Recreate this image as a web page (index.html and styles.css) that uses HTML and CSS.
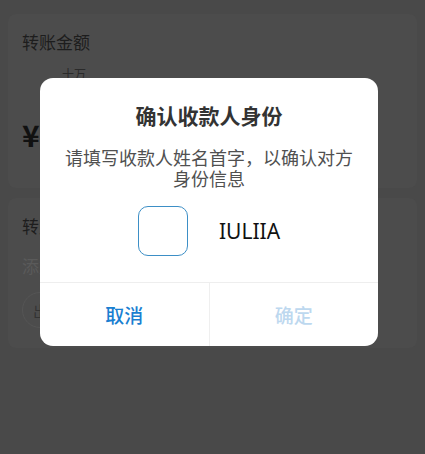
FILE: index.html
```html
<!DOCTYPE html>
<html lang="zh">
<head>
<meta charset="utf-8">
<link rel="stylesheet" href="styles.css">
</head>
<body>
<div class="page">
  <section class="card card-amount">
    <div class="label">转账金额</div>
    <div class="hint">十万</div>
    <div class="yen">¥</div>
  </section>
  <section class="card card-note">
    <div class="label">转账说明</div>
    <div class="muted">添加转账说明</div>
    <div class="pill">出</div>
  </section>
</div>
<div class="dialog">
  <div class="dialog-body">
    <h1 class="title">确认收款人身份</h1>
    <p class="desc">请填写收款人姓名首字，以确认对方身份信息</p>
    <div class="name-row">
      <div class="input-box"></div>
      <span class="name">IULIIA</span>
    </div>
  </div>
  <div class="actions">
    <div class="btn btn-cancel">取消</div>
    <div class="btn btn-ok">确定</div>
  </div>
</div>
</body>
</html>
```
FILE: styles.css
```css
html, body {
  margin: 0;
  padding: 0;
  background: #494949;
  font-family: "Noto Sans CJK SC", "Noto Sans", sans-serif;
}
.page {
  width: 425px;
  height: 454px;
  padding: 14px 8px 0;
  box-sizing: border-box;
  display: flex;
  flex-direction: column;
  gap: 10px;
}
.card {
  background: #4c4c4c;
  border-radius: 8px;
  padding: 0 14px;
  display: flex;
  flex-direction: column;
  color: #1d1d1d;
}
.card-amount {
  height: 174px;
}
.card-note {
  height: 150px;
}
.label {
  font-size: 17px;
  line-height: 24px;
  margin-top: 16px;
}
.hint {
  font-size: 12px;
  line-height: 16px;
  margin: 12px 0 0 40px;
  color: #2a2a2a;
}
.yen {
  font-size: 30px;
  font-weight: 700;
  line-height: 40px;
  margin-top: 32px;
  color: #111;
}
.muted {
  font-size: 17px;
  line-height: 24px;
  margin-top: 16px;
  color: #5a5a5a;
}
.pill {
  margin-top: 14px;
  width: 80px;
  height: 36px;
  border: 1px solid #555;
  border-radius: 18px;
  font-size: 15px;
  line-height: 36px;
  padding-left: 10px;
  box-sizing: border-box;
  color: #333;
}
.dialog {
  position: absolute;
  left: 40px;
  top: 78px;
  width: 338px;
  height: 268px;
  background: #fff;
  border-radius: 13px;
  display: flex;
  flex-direction: column;
  overflow: hidden;
}
.dialog-body {
  padding: 22px 20px 0;
  height: 205px;
  box-sizing: border-box;
  border-bottom: 1px solid #eeeeee;
  display: flex;
  flex-direction: column;
  align-items: center;
}
.title {
  margin: 0;
  font-size: 21px;
  line-height: 30px;
  font-weight: 700;
  color: #333;
}
.desc {
  margin: 17px 0 0;
  font-size: 18px;
  line-height: 21px;
  color: #505050;
  text-align: center;
}
.name-row {
  margin-top: 17px;
  display: flex;
  align-items: center;
  gap: 31px;
}
.input-box {
  width: 50px;
  height: 50px;
  box-sizing: border-box;
  border: 1px solid #3d8fc6;
  border-radius: 10px;
}
.name {
  font-family: "Noto Sans", sans-serif;
  font-size: 21px;
  color: #111;
}
.actions {
  flex: 1;
  display: flex;
}
.btn {
  flex: 1;
  display: flex;
  align-items: center;
  justify-content: center;
  font-size: 19px;
  font-weight: 500;
}
.btn-cancel {
  color: #1a7fd1;
  border-right: 1px solid #efefef;
}
.btn-ok {
  color: #bdd8ef;
}
```
